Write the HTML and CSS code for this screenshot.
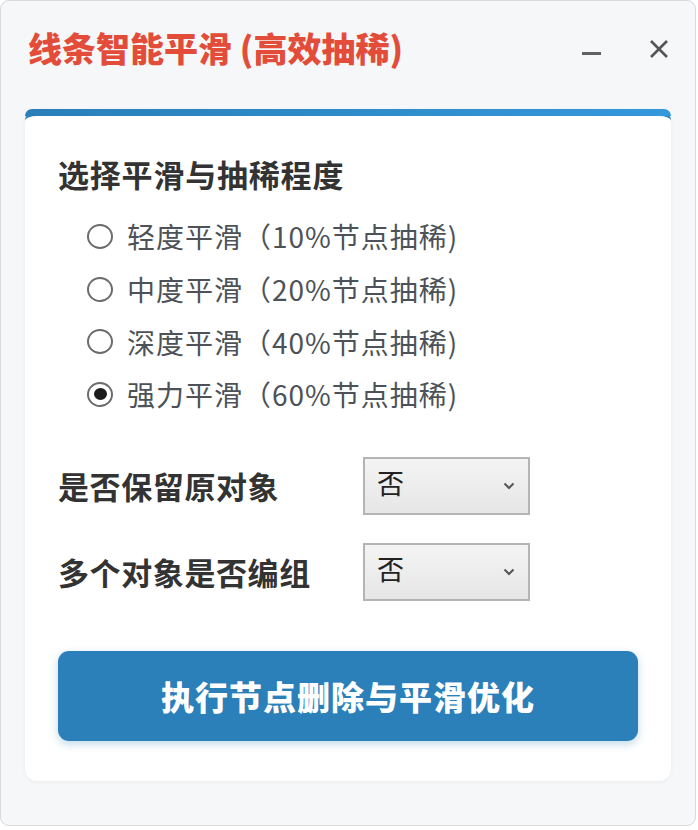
FILE: index.html
```html
<!DOCTYPE html>
<html lang="zh-CN">
<head>
<meta charset="utf-8">
<title>线条智能平滑</title>
<link rel="stylesheet" href="styles.css">
</head>
<body>
<div class="window">
  <div class="titlebar">
    <div class="title">线条智能平滑 (高效抽稀)</div>
    <div class="controls">
      <span class="btn-min"></span>
      <svg class="btn-close" width="20" height="20" viewBox="0 0 20 20"><path d="M2 2 L18 18 M18 2 L2 18" stroke="#555" stroke-width="2.6" fill="none"/></svg>
    </div>
  </div>
  <div class="card">
    <div class="section-title">选择平滑与抽稀程度</div>
    <div class="radios">
      <div class="radio-row"><span class="radio"></span><span class="radio-text">轻度平滑（10%节点抽稀)</span></div>
      <div class="radio-row"><span class="radio"></span><span class="radio-text">中度平滑（20%节点抽稀)</span></div>
      <div class="radio-row"><span class="radio"></span><span class="radio-text">深度平滑（40%节点抽稀)</span></div>
      <div class="radio-row"><span class="radio checked"></span><span class="radio-text">强力平滑（60%节点抽稀)</span></div>
    </div>
    <div class="options">
      <div class="opt-label">是否保留原对象</div>
      <div class="select"><span class="sel-text">否</span><svg width="12" height="8" viewBox="0 0 12 8"><path d="M1.5 1.5 L6 6 L10.5 1.5" stroke="#555" stroke-width="2" fill="none"/></svg></div>
      <div class="opt-label">多个对象是否编组</div>
      <div class="select"><span class="sel-text">否</span><svg width="12" height="8" viewBox="0 0 12 8"><path d="M1.5 1.5 L6 6 L10.5 1.5" stroke="#555" stroke-width="2" fill="none"/></svg></div>
    </div>
    <div class="action">执行节点删除与平滑优化</div>
  </div>
</div>
</body>
</html>
```

FILE: styles.css
```css
* { box-sizing: border-box; }
html, body { margin: 0; padding: 0; background: #ffffff; }
body { font-family: "Noto Sans CJK SC", "Noto Sans", sans-serif; }

.window {
  width: 696px;
  height: 826px;
  border: 1px solid #d6dadd;
  border-radius: 9px;
  background: #f5f7f9;
  display: flex;
  flex-direction: column;
}

.titlebar {
  height: 108px;
  display: flex;
  align-items: flex-start;
  justify-content: space-between;
  padding: 24px 26px 0 27px;
}

.title {
  color: #e44c3a;
  font-size: 34px;
  font-weight: 900;
  line-height: 46px;
}

.controls {
  display: flex;
  align-items: center;
  gap: 48px;
  height: 48px;
}

.btn-min {
  width: 19px;
  height: 3px;
  background: #5f6163;
  margin-top: 8px;
}

.btn-close { display: block; }

.card {
  margin: 0 24px;
  height: 672px;
  background: #ffffff;
  border-radius: 12px;
  border-top: 7px solid #2e88c7;
  box-shadow: 0 1px 4px rgba(0,0,0,0.05);
  padding: 38px 33px 0 33px;
  position: relative;
}

.card::before {
  content: "";
  position: absolute;
  left: 0; right: 0; top: -7px;
  height: 7px;
  border-radius: 12px 12px 0 0;
  background: linear-gradient(90deg, #2a7fb8, #3498db);
}

.section-title {
  font-size: 31px;
  font-weight: 700;
  color: #333;
  line-height: 40px;
  letter-spacing: 0.8px;
}

.radios {
  padding: 16px 0 0 29px;
  display: flex;
  flex-direction: column;
}

.radio-row {
  height: 52.7px;
  display: flex;
  align-items: center;
  gap: 14px;
}

.radio {
  width: 26px;
  height: 25px;
  border: 2px solid #6b6b6b;
  border-radius: 50%;
  display: flex;
  align-items: center;
  justify-content: center;
  flex: none;
}

.radio.checked::after {
  content: "";
  width: 13px;
  height: 12px;
  border-radius: 50%;
  background: #1b1b1b;
}

.radio-text {
  font-size: 28px;
  color: #4d5258;
  line-height: 34px;
  letter-spacing: 1px;
}

.options {
  margin-top: 36px;
  display: grid;
  grid-template-columns: 305px 167px;
  row-gap: 28px;
  align-items: center;
}

.opt-label {
  font-size: 31px;
  font-weight: 700;
  color: #333;
  letter-spacing: 0.6px;
}

.select {
  height: 58px;
  border: 2px solid #b4b4b4;
  background: linear-gradient(#f4f4f4, #e6e6e6);
  display: flex;
  align-items: center;
  justify-content: space-between;
  padding: 0 13px 0 12px;
}

.sel-text {
  font-size: 27px;
  color: #222;
  margin-top: -6px;
}

.action {
  margin-top: 50px;
  height: 90px;
  border-radius: 11px;
  background: #2b80b9;
  box-shadow: 0 3px 8px rgba(41,128,185,0.3);
  color: #fff;
  font-size: 33px;
  font-weight: 900;
  letter-spacing: 1px;
  display: flex;
  align-items: center;
  justify-content: center;
}
```
